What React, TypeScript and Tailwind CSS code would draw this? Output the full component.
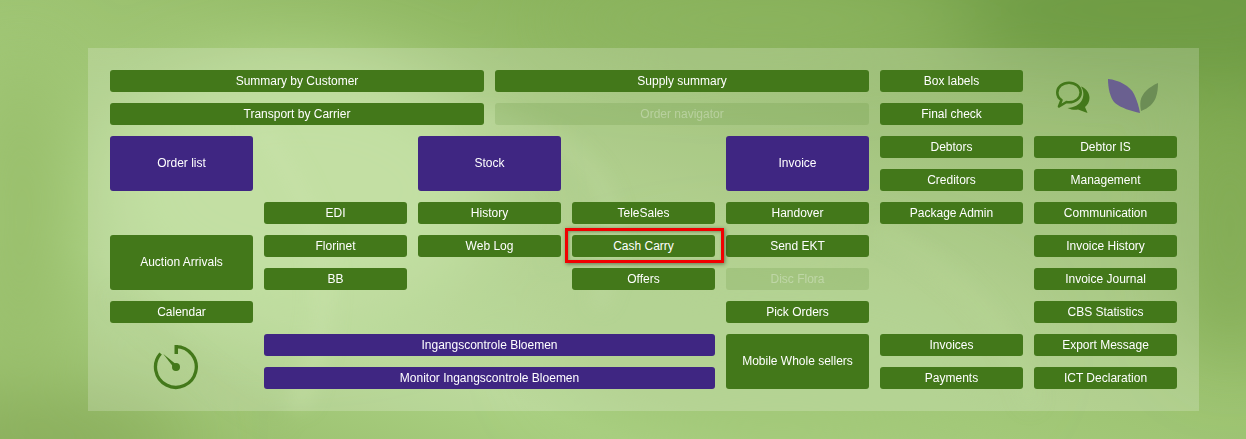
import React from "react";

const base = "rounded-[3px] flex items-center justify-center text-[12px] leading-none text-white";
const G = "bg-[#43781a]";
const P = "bg-[#3f2682]";
const D = "bg-[#43781a]/15 text-white/30";

type It = [string, string, string];
const items: It[] = [
  ["Summary by Customer", G, "col-start-1 col-span-5 row-start-1"],
  ["Supply summary", G, "col-start-6 col-span-5 row-start-1"],
  ["Box labels", G, "col-start-11 col-span-2 row-start-1"],
  ["Transport by Carrier", G, "col-start-1 col-span-5 row-start-2"],
  ["Order navigator", D, "col-start-6 col-span-5 row-start-2"],
  ["Final check", G, "col-start-11 col-span-2 row-start-2"],
  ["Order list", P, "col-start-1 col-span-2 row-start-3 row-span-2 pb-[2px]"],
  ["Stock", P, "col-start-5 col-span-2 row-start-3 row-span-2 pb-[2px]"],
  ["Invoice", P, "col-start-9 col-span-2 row-start-3 row-span-2 pb-[2px]"],
  ["Debtors", G, "col-start-11 col-span-2 row-start-3"],
  ["Debtor IS", G, "col-start-13 col-span-2 row-start-3"],
  ["Creditors", G, "col-start-11 col-span-2 row-start-4"],
  ["Management", G, "col-start-13 col-span-2 row-start-4"],
  ["EDI", G, "col-start-3 col-span-2 row-start-5"],
  ["History", G, "col-start-5 col-span-2 row-start-5"],
  ["TeleSales", G, "col-start-7 col-span-2 row-start-5"],
  ["Handover", G, "col-start-9 col-span-2 row-start-5"],
  ["Package Admin", G, "col-start-11 col-span-2 row-start-5"],
  ["Communication", G, "col-start-13 col-span-2 row-start-5"],
  ["Auction Arrivals", G, "col-start-1 col-span-2 row-start-6 row-span-2 pb-[2px]"],
  ["Florinet", G, "col-start-3 col-span-2 row-start-6"],
  ["Web Log", G, "col-start-5 col-span-2 row-start-6"],
  ["Send EKT", G, "col-start-9 col-span-2 row-start-6"],
  ["Invoice History", G, "col-start-13 col-span-2 row-start-6"],
  ["BB", G, "col-start-3 col-span-2 row-start-7"],
  ["Offers", G, "col-start-7 col-span-2 row-start-7"],
  ["Disc Flora", D, "col-start-9 col-span-2 row-start-7"],
  ["Invoice Journal", G, "col-start-13 col-span-2 row-start-7"],
  ["Calendar", G, "col-start-1 col-span-2 row-start-8"],
  ["Pick Orders", G, "col-start-9 col-span-2 row-start-8"],
  ["CBS Statistics", G, "col-start-13 col-span-2 row-start-8"],
  ["Ingangscontrole Bloemen", P, "col-start-3 col-span-6 row-start-9"],
  ["Mobile Whole sellers", G, "col-start-9 col-span-2 row-start-9 row-span-2 pb-[2px]"],
  ["Invoices", G, "col-start-11 col-span-2 row-start-9"],
  ["Export Message", G, "col-start-13 col-span-2 row-start-9"],
  ["Monitor Ingangscontrole Bloemen", P, "col-start-3 col-span-6 row-start-10"],
  ["Payments", G, "col-start-11 col-span-2 row-start-10"],
  ["ICT Declaration", G, "col-start-13 col-span-2 row-start-10"],
];

function Backdrop() {
  return (
    <svg className="absolute inset-0" width="1246" height="439" viewBox="0 0 1246 439" aria-hidden="true">
      <defs>
        <linearGradient id="bg" x1="0" y1="1" x2="1" y2="0">
          <stop offset="0" stopColor="#94b966" />
          <stop offset="0.25" stopColor="#aad082" />
          <stop offset="0.55" stopColor="#9cc270" />
          <stop offset="0.8" stopColor="#84ae55" />
          <stop offset="1" stopColor="#6b9a40" />
        </linearGradient>
        <filter id="b1" x="-40%" y="-40%" width="180%" height="180%"><feGaussianBlur stdDeviation="38" /></filter>
        <filter id="b2" x="-30%" y="-30%" width="160%" height="160%"><feGaussianBlur stdDeviation="9" /></filter>
      </defs>
      <rect width="1246" height="439" fill="url(#bg)" />
      <g filter="url(#b1)">
        <ellipse cx="300" cy="190" rx="200" ry="130" fill="#b4d88c" />
        <ellipse cx="20" cy="220" rx="50" ry="170" fill="#98be6a" />
        <ellipse cx="60" cy="440" rx="130" ry="30" fill="#86aa58" />
        <ellipse cx="1150" cy="10" rx="260" ry="50" fill="#6f9c44" />
        <ellipse cx="760" cy="20" rx="230" ry="35" fill="#8db560" />
        <ellipse cx="780" cy="350" rx="230" ry="90" fill="#a2c878" />
        <ellipse cx="1230" cy="230" rx="40" ry="130" fill="#82ab54" />
      </g>
      <g filter="url(#b2)" fill="none" strokeLinecap="round">
        <path d="M260 130 C330 220 340 300 300 400" stroke="#c0dd9a" strokeWidth="22" opacity="0.3" />
        <path d="M480 120 C580 130 640 190 600 300" stroke="#b9d992" strokeWidth="18" opacity="0.25" />
        <path d="M530 160 C570 180 580 220 555 260" stroke="#9fc277" strokeWidth="12" opacity="0.25" />
        <path d="M120 300 C180 350 220 390 280 420" stroke="#98bb70" strokeWidth="16" opacity="0.25" />
        <path d="M880 230 C950 270 1010 320 1030 400" stroke="#b0d088" strokeWidth="18" opacity="0.2" />
      </g>
    </svg>
  );
}

export default function App() {
  return (
    <div
      className="relative w-[1246px] h-[439px] overflow-hidden pt-[48px] pl-[88px]"
      style={{ fontFamily: '"Liberation Sans", Arial, sans-serif' }}
    >
      <Backdrop />
      <div className="relative w-[1111px] h-[363px] bg-white/20 p-[22px]">
        <div className="grid grid-cols-[repeat(14,66px)] grid-rows-[repeat(10,22px)] gap-[11px]">
          {items.map(([label, color, place]) => (
            <div key={label} className={`${base} ${color} ${place}`}>{label}</div>
          ))}
          <div className={`relative ${base} ${G} col-start-7 col-span-2 row-start-6`}>
            Cash Carry
            <div className="absolute left-[-7px] right-[-9px] top-[-7px] bottom-[-6px] border-[3px] border-[#f00000] shadow-[1px_1px_4px_rgba(0,0,0,0.45),inset_1px_1px_3px_rgba(0,0,0,0.3)]" />
          </div>
          <div className="col-start-13 col-span-2 row-start-1 row-span-2 flex items-start pl-[20px] pt-[8px] gap-[15px]">
            <svg width="38" height="38" viewBox="0 0 38 38" className="shrink-0" aria-hidden="true">
              <path d="M27 8.500 C32.500 10.500 35.500 15 35.500 20 C35.500 24 33.500 27 31 29 L33.500 35 L24 31.500 C21 32.200 17.500 31.800 13.500 30 C20 29.500 25.500 27 28 22 C30 18 30 13 27 8.500 Z" fill="#43781a" />
              <path d="M15 4.700 C8.500 4.700 3.300 9 3.300 14.500 C3.300 18 5 20.500 7.500 22 L5 28.500 L12.500 24 C13.300 24.200 14.200 24.300 15 24.300 C21.500 24.300 26.700 20 26.700 14.500 C26.700 9 21.500 4.700 15 4.700 Z" fill="none" stroke="#43781a" strokeWidth="2.600" strokeLinejoin="round" />
            </svg>
            <svg width="52" height="38" viewBox="0 0 52 38" className="shrink-0" aria-hidden="true">
              <path d="M1 1 C12 2 23 8 27 16 C30 22 32 29 33 35 C24 33 14 30 8 25 C3 20 1 10 1 1 Z" fill="#6a6090" />
              <path d="M51 5 C42 9 35 15 33.500 23 C33 27 33.500 30 34 33 C42 30 47 25 49 19 C50.500 15 51 10 51 5 Z" fill="#6c8d55" />
            </svg>
          </div>
          <div className="col-start-1 col-span-2 row-start-9 row-span-2 flex items-start pl-[43px] pt-[10px]">
            <svg width="46" height="46" viewBox="0 0 46 46" aria-hidden="true">
              <path d="M23 2.600 A20.400 20.400 0 1 1 7.600 9.500" fill="none" stroke="#43781a" strokeWidth="3.300" />
              <path d="M21.500 1 H25 V10 H21.500 Z" fill="#43781a" />
              <path d="M10.300 10 L24.500 21.500 L21.500 24.500 Z" fill="#43781a" />
              <circle cx="23" cy="23" r="4" fill="#43781a" />
            </svg>
          </div>
        </div>
      </div>
    </div>
  );
}
